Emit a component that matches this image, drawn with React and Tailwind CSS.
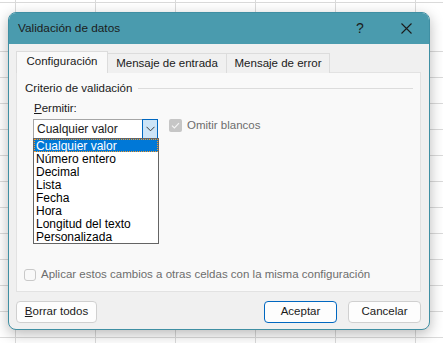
export default function App() {
  const rowCount = 14;
  const colCount = 7;
  const cells = [];
  for (let r = 0; r < rowCount; r++) {
    for (let c = 0; c < colCount; c++) {
      cells.push(<div key={r + "-" + c} className="border-r border-b border-[#dadada]" />);
    }
  }
  const items = [
    "Cualquier valor",
    "Número entero",
    "Decimal",
    "Lista",
    "Fecha",
    "Hora",
    "Longitud del texto",
    "Personalizada",
  ];
  return (
    <div className="relative w-[443px] h-[343px] overflow-hidden bg-white font-['Liberation_Sans',Arial,sans-serif] text-[11.5px] text-[#1a1a1a]">
      <div className="grid grid-cols-[16px_repeat(6,80px)] grid-rows-[3px_49px_repeat(12,26px)]">
        {cells}
      </div>

      <div className="absolute left-[8px] top-[12px] w-[422px] h-[318px] rounded-[8px] border border-[#3f8fa3] bg-[#f0f0f0] shadow-[0_4px_14px_rgba(0,0,0,0.28)] overflow-hidden flex flex-col">
        {/* Title bar */}
        <div className="h-[31px] bg-[#4a9bae] flex items-center pl-[9px] shrink-0">
          <span className="text-[11.8px] text-[#1b1b1b] leading-none">Validación de datos</span>
          <div className="ml-auto flex h-full">
            <div className="w-[46px] h-full flex items-center justify-center text-[14px] text-[#1b1b1b]">?</div>
            <div className="w-[46px] h-full flex items-center justify-center">
              <svg width="11" height="11" viewBox="0 0 11 11">
                <path d="M0.5 0.5 L10.5 10.5 M10.5 0.5 L0.5 10.5" stroke="#1b1b1b" strokeWidth="1.1" fill="none" />
              </svg>
            </div>
          </div>
        </div>

        {/* Body */}
        <div className="flex-1 flex flex-col pl-[7px] pr-[8px] pt-[7px]">
          {/* Tabs */}
          <div className="flex items-end h-[22px] relative z-10">
            <div className="w-[92px] h-[22px] border border-b-0 border-[#dcdcdc] bg-[#f9f9f9] flex items-center justify-center pb-[1px]">
              Configuración
            </div>
            <div className="w-[119px] h-[20px] border border-l-0 border-b-0 border-[#dcdcdc] bg-[#f0f0f0] flex items-center justify-center">
              Mensaje de entrada
            </div>
            <div className="w-[103px] h-[20px] border border-l-0 border-b-0 border-[#dcdcdc] bg-[#f0f0f0] flex items-center justify-center">
              Mensaje de error
            </div>
          </div>

          {/* Panel */}
          <div className="-mt-[1px] h-[220px] border border-[#e2e2e2] bg-[#f9f9f9] flex flex-col">
            <div className="flex items-center h-[14px] mt-[9px] pl-[8px] pr-[7px]">
              <span className="leading-none">Criterio de validación</span>
              <div className="flex-1 h-px bg-[#dcdcdc] ml-[6px] -mt-[1px]" />
            </div>

            <div className="mt-[6px] pl-[17px] h-[14px] flex items-center leading-none">
              <span><span className="underline">P</span>ermitir:</span>
            </div>

            <div className="mt-[3px] pl-[16px] flex items-start">
              <div className="relative w-[125px] h-[20px] border border-[#a6a6a6] bg-white flex items-center z-20">
                <span className="pl-[3px] leading-none text-[12px]">Cualquier valor</span>
                <div className="ml-auto w-[16px] h-[20px] -my-px -mr-px border border-[#0067c0] bg-[#cce4f7] flex items-center justify-center">
                  <svg width="9" height="6" viewBox="0 0 9 6">
                    <path d="M0.5 0.8 L4.5 4.8 L8.5 0.8" stroke="#3a3a3a" strokeWidth="1" fill="none" />
                  </svg>
                </div>

                {/* Dropdown list */}
                <div className="absolute left-[-1px] top-[18px] w-[126px] h-[106px] border border-[#646464] bg-white text-[12px] text-black flex flex-col">
                  {items.map((it, i) => (
                    <div
                      key={it}
                      className={
                        i === 0
                          ? "h-[13px] shrink-0 bg-[#0078d7] text-white border border-dotted border-[#f59b2a] pl-[1px] flex items-center leading-none"
                          : "h-[13px] shrink-0 pl-[2px] flex items-center leading-none"
                      }
                    >
                      {it}
                    </div>
                  ))}
                </div>
              </div>

              <div className="ml-[11px] flex items-center h-[13px]">
                <div className="w-[13px] h-[13px] rounded-[2px] bg-[#c6c6c6] flex items-center justify-center">
                  <svg width="9" height="7" viewBox="0 0 9 7">
                    <path d="M1 3.6 L3.4 6 L8 1.2" stroke="#f4f4f4" strokeWidth="1.2" fill="none" />
                  </svg>
                </div>
                <span className="ml-[5px] text-[#6d6d6d] leading-none">Omitir blancos</span>
              </div>
            </div>

            <div className="mt-auto mb-[10px] pl-[7px] flex items-center">
              <div className="w-[12px] h-[12px] rounded-[3px] border border-[#c9c9c9] bg-[#f9f9f9]" />
              <span className="ml-[5px] text-[#6d6d6d] leading-none">
                Aplicar estos cambios a otras celdas con la misma configuración
              </span>
            </div>
          </div>

          {/* Buttons */}
          <div className="mt-[9px] flex">
            <button className="w-[81px] h-[22px] rounded-[4px] border border-[#d0d0d0] bg-[#fdfdfd] flex items-center justify-center leading-none text-[#1a1a1a]">
              <span><span className="underline">B</span>orrar todos</span>
            </button>
            <button className="ml-auto w-[73px] h-[22px] rounded-[4px] border border-[#0067c0] bg-[#fdfdfd] flex items-center justify-center leading-none text-[#1a1a1a]">
              Aceptar
            </button>
            <button className="ml-[11px] w-[73px] h-[22px] rounded-[4px] border border-[#d0d0d0] bg-[#fdfdfd] flex items-center justify-center leading-none text-[#1a1a1a]">
              Cancelar
            </button>
          </div>
        </div>
      </div>
    </div>
  );
}
